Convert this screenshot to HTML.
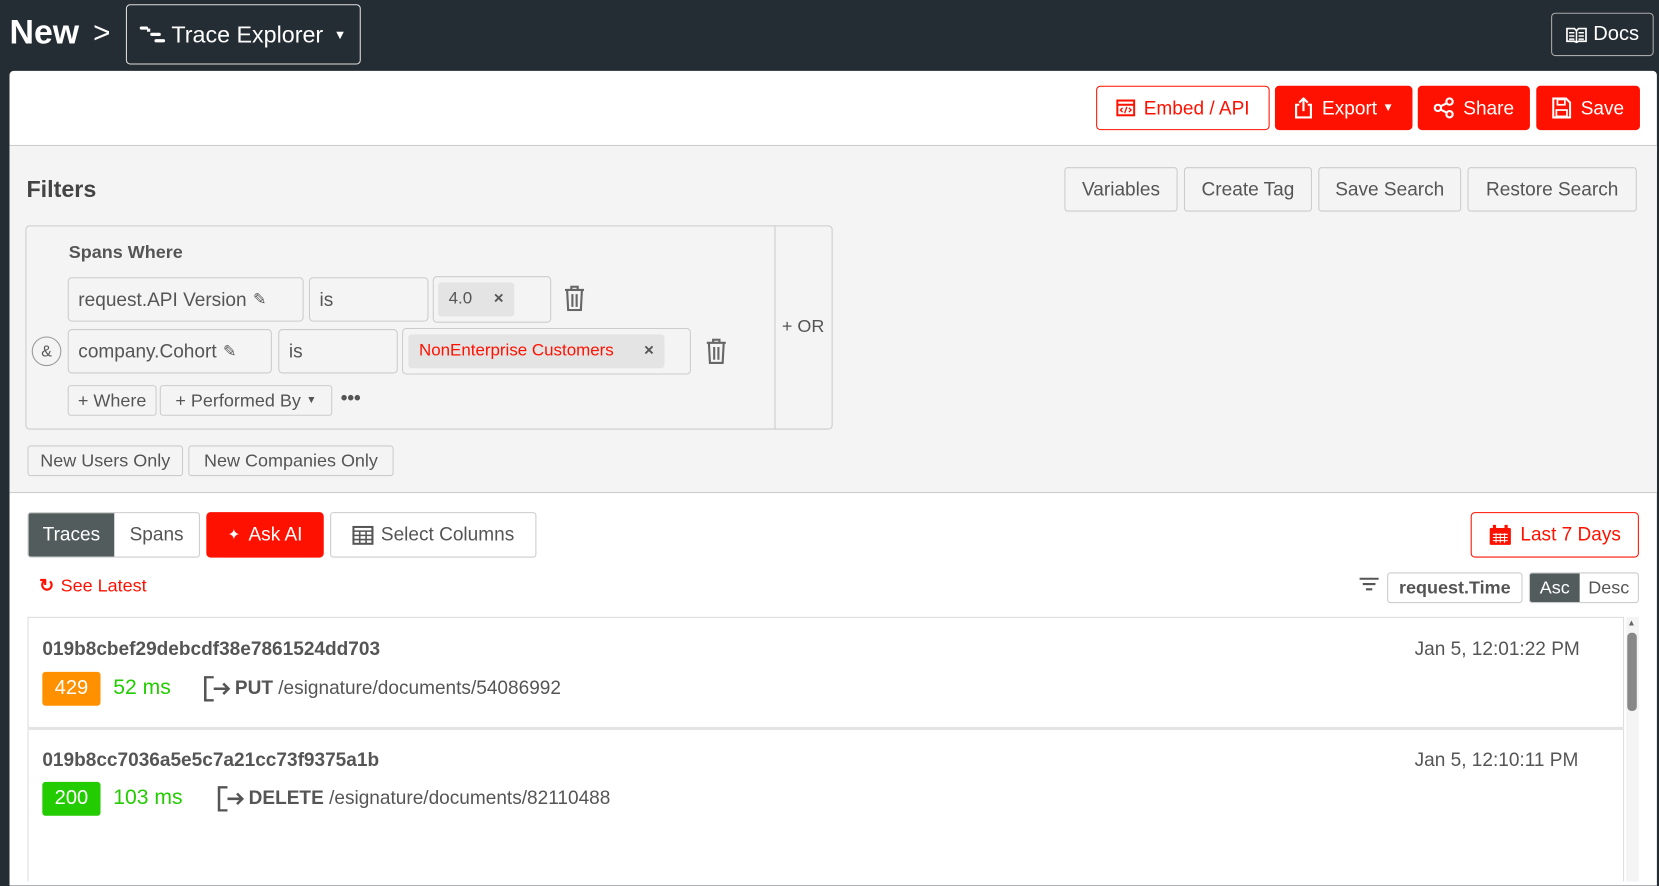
<!DOCTYPE html>
<html><head><meta charset="utf-8"><style>
*{box-sizing:border-box;margin:0;padding:0}
html,body{width:1659px;height:825px;overflow:hidden;background:#252d34}
#w{position:absolute;left:0;top:0;width:1568px;height:780px;transform:scale(1.05804);transform-origin:0 0;font-family:"Liberation Sans",sans-serif;color:#555}
.a{position:absolute}
.btn{position:absolute;border:1px solid #ccc;border-radius:3px;background:#f4f4f4;color:#555;font-size:18px;display:flex;align-items:center;justify-content:center;white-space:nowrap}
.red{background:#ff1100;color:#fff;border-color:#ff1100}
.fld{position:absolute;border:1px solid #ccc;border-radius:4px;background:#f4f4f4;font-size:18px;color:#555;display:flex;align-items:center;padding-left:9px;white-space:nowrap}
.chip{background:#e4e4e4;border-radius:3px;display:flex;align-items:center;font-size:16px;height:32px;padding:0 10px}
</style></head><body><div id="w">
<div class="a" style="left:9px;top:12px;font-size:32px;font-weight:bold;color:#fff">New</div>
<div class="a" style="left:88px;top:15px;font-size:28px;color:#fff">&gt;</div>
<div class="a" style="left:119px;top:4px;width:222px;height:57px;border:1px solid #ddd;border-radius:4px;color:#fff;font-size:22px;display:flex;align-items:center;padding-left:12px">
<svg width="26" height="18" viewBox="0 0 26 18"><rect x="0" y="1" width="8" height="3" rx="1.5" fill="#fff"/><rect x="10" y="7" width="10" height="3" rx="1.5" fill="#fff"/><rect x="14" y="13" width="10" height="3" rx="1.5" fill="#fff"/><rect x="7" y="3" width="3" height="3" fill="#fff"/></svg>
<span style="margin-left:4px">Trace Explorer</span><span style="margin-left:10px;font-size:12px">▼</span></div>
<div class="a" style="left:1466px;top:12px;width:97px;height:41px;border:1px solid #aaa;border-radius:4px;color:#fff;font-size:19px;display:flex;align-items:center;justify-content:center">
<svg width="20" height="16" viewBox="0 0 20 16" style="margin-right:6px"><path d="M1 2h7l2 2 2-2h7v12h-7l-2 1-2-1H1z" fill="none" stroke="#fff" stroke-width="1.6"/><path d="M10 4v11M3 6h5M3 9h5M3 12h5M12 6h5M12 9h5M12 12h5" stroke="#fff" stroke-width="1.4"/></svg>Docs</div>

<div class="a" style="left:9px;top:67px;width:1557px;height:770px;background:#fff;border-radius:4px 4px 0 0"></div>
<div class="a" style="left:9px;top:137px;width:1557px;height:329px;background:#f4f4f4;border-top:1px solid #ccc;border-bottom:1px solid #ccc"></div>

<div class="btn" style="left:1036px;top:81px;width:164px;height:42px;background:#fff;border-color:#ff1100;color:#ff1100;border-radius:4px">
<svg width="18" height="16" viewBox="0 0 18 16" style="margin-right:8px"><rect x="1" y="1" width="16" height="14" fill="none" stroke="#ff1100" stroke-width="2"/><path d="M1 5h16" stroke="#ff1100" stroke-width="2"/><path d="M6 8l-2 2 2 2M12 8l2 2-2 2M10 7l-2 6" fill="none" stroke="#ff1100" stroke-width="1.3"/></svg>Embed / API</div>
<div class="btn red" style="left:1205px;top:81px;width:130px;height:42px;border-radius:4px">
<svg width="18" height="20" viewBox="0 0 18 20" style="margin-right:9px"><path d="M5 7H2v12h14V7h-3M9 13V2M5 5l4-4 4 4" fill="none" stroke="#fff" stroke-width="2"/></svg>Export <span style="font-size:11px;margin-left:5px">▼</span></div>
<div class="btn red" style="left:1340px;top:81px;width:106px;height:42px;border-radius:4px">
<svg width="20" height="20" viewBox="0 0 20 20" style="margin-right:8px"><circle cx="4" cy="10" r="3" fill="none" stroke="#fff" stroke-width="2"/><circle cx="15" cy="4" r="3" fill="none" stroke="#fff" stroke-width="2"/><circle cx="15" cy="16" r="3" fill="none" stroke="#fff" stroke-width="2"/><path d="M6.5 8.5l6-3M6.5 11.5l6 3" stroke="#fff" stroke-width="2"/></svg>Share</div>
<div class="btn red" style="left:1452px;top:81px;width:98px;height:42px;border-radius:4px">
<svg width="18" height="20" viewBox="0 0 18 20" style="margin-right:9px"><path d="M1 1h12l4 4v14H1z" fill="none" stroke="#fff" stroke-width="2"/><rect x="5" y="2" width="7" height="5" fill="none" stroke="#fff" stroke-width="1.6"/><rect x="4" y="12" width="10" height="6" fill="none" stroke="#fff" stroke-width="1.6"/></svg>Save</div>

<div class="a" style="left:25px;top:166px;font-size:22px;font-weight:bold;color:#444">Filters</div>
<div class="btn" style="left:1006px;top:158px;width:107px;height:42px">Variables</div>
<div class="btn" style="left:1119px;top:158px;width:121px;height:42px">Create Tag</div>
<div class="btn" style="left:1246px;top:158px;width:135px;height:42px">Save Search</div>
<div class="btn" style="left:1387px;top:158px;width:160px;height:42px">Restore Search</div>

<div class="a" style="left:24px;top:213px;width:763px;height:193px;border:1px solid #ccc;border-radius:4px"></div>
<div class="a" style="left:732px;top:213px;width:1px;height:193px;background:#ccc"></div>
<div class="a" style="left:739px;top:299px;font-size:17px;color:#555">+ OR</div>
<div class="a" style="left:65px;top:229px;font-size:17px;font-weight:bold;color:#555">Spans Where</div>
<div class="fld" style="left:64px;top:262px;width:223px;height:42px">request.API Version <span style="margin-left:6px;font-size:15px">✎</span></div>
<div class="fld" style="left:292px;top:262px;width:113px;height:42px">is</div>
<div class="fld" style="left:409px;top:261px;width:112px;height:44px;padding-left:4px"><div class="chip" style="width:72px;justify-content:space-between">4.0 <span style="font-weight:bold">×</span></div></div>
<svg class="a" style="left:533px;top:270px" width="20" height="24" viewBox="0 0 20 24"><path d="M1 4h18M7 4V1h6v3M3 4l1 19h12l1-19M8 8v12M12 8v12" fill="none" stroke="#666" stroke-width="2"/></svg>
<div class="a" style="left:30px;top:318px;width:28px;height:28px;border:1px solid #999;border-radius:50%;font-size:15px;display:flex;align-items:center;justify-content:center">&amp;</div>
<div class="fld" style="left:64px;top:311px;width:193px;height:42px">company.Cohort <span style="margin-left:6px;font-size:15px">✎</span></div>
<div class="fld" style="left:263px;top:311px;width:113px;height:42px">is</div>
<div class="fld" style="left:380px;top:310px;width:273px;height:44px;padding-left:5px"><div class="chip" style="width:242px;color:#ff1100;justify-content:space-between">NonEnterprise Customers <span style="font-weight:bold;color:#555">×</span></div></div>
<svg class="a" style="left:667px;top:320px" width="20" height="24" viewBox="0 0 20 24"><path d="M1 4h18M7 4V1h6v3M3 4l1 19h12l1-19M8 8v12M12 8v12" fill="none" stroke="#666" stroke-width="2"/></svg>
<div class="btn" style="left:64px;top:364px;width:84px;height:29px;font-size:17px">+ Where</div>
<div class="btn" style="left:151px;top:364px;width:163px;height:29px;font-size:17px">+ Performed By <span style="font-size:10px;margin-left:5px">▼</span></div>
<div class="a" style="left:322px;top:366px;font-size:18px;font-weight:bold">•••</div>
<div class="btn" style="left:26px;top:421px;width:147px;height:29px;font-size:17px">New Users Only</div>
<div class="btn" style="left:178px;top:421px;width:194px;height:29px;font-size:17px">New Companies Only</div>

<div class="a" style="left:26px;top:484px;width:163px;height:43px;border:1px solid #ccc;border-radius:3px;overflow:hidden;display:flex;font-size:18px">
<div style="width:81px;background:#525c5c;color:#fff;display:flex;align-items:center;justify-content:center">Traces</div>
<div style="flex:1;display:flex;align-items:center;justify-content:center">Spans</div></div>
<div class="btn red" style="left:195px;top:484px;width:111px;height:43px;border-radius:4px"><span style="font-size:14px;margin-right:8px">✦</span>Ask AI</div>
<div class="btn" style="left:312px;top:484px;width:195px;height:43px;background:#fff">
<svg width="20" height="18" viewBox="0 0 20 18" style="margin-right:7px"><rect x="1" y="1" width="18" height="16" fill="none" stroke="#555" stroke-width="2"/><path d="M1 5h18M1 9h18M1 13h18M7 5v12M13 5v12" stroke="#555" stroke-width="1.5"/></svg>Select Columns</div>
<div class="btn" style="left:1390px;top:484px;width:159px;height:43px;background:#fff;border-color:#ff1100;color:#ff1100;border-radius:4px">
<svg width="22" height="20" viewBox="0 0 22 20" style="margin-right:8px"><rect x="1" y="3" width="20" height="16" rx="1" fill="#ff1100"/><rect x="4" y="0" width="3" height="5" fill="#ff1100"/><rect x="15" y="0" width="3" height="5" fill="#ff1100"/><path d="M4 9h14M4 12h14M4 15h14M7 8v9M11 8v9M15 8v9" stroke="#fff" stroke-width="1"/></svg>Last 7 Days</div>

<div class="a" style="left:37px;top:544px;font-size:17px;color:#ff1100"><span style="font-weight:bold;margin-right:6px">↻</span>See Latest</div>
<svg class="a" style="left:1284px;top:545px" width="20" height="16" viewBox="0 0 20 16"><path d="M1 2h18M4 7h12M7 12h6" stroke="#555" stroke-width="2"/></svg>
<div class="btn" style="left:1311px;top:541px;width:128px;height:29px;background:#fff;font-weight:bold;font-size:17px">request.Time</div>
<div class="a" style="left:1445px;top:541px;width:104px;height:29px;border:1px solid #ccc;border-radius:3px;overflow:hidden;display:flex;font-size:17px">
<div style="width:47px;background:#525c5c;color:#fff;display:flex;align-items:center;justify-content:center">Asc</div>
<div style="flex:1;display:flex;align-items:center;justify-content:center">Desc</div></div>

<div class="a" style="left:26px;top:583px;width:1509px;height:250px;border:1px solid #ddd;border-bottom:none"></div>
<div class="a" style="left:26px;top:687px;width:1509px;height:3px;background:#e4e4e4"></div>
<div class="a" style="left:1537px;top:583px;width:12px;height:250px;background:#f4f4f4"></div>
<div class="a" style="left:1538px;top:598px;width:9px;height:74px;background:#888;border-radius:4px"></div>
<div class="a" style="left:1538px;top:584px;font-size:8px;color:#666">▲</div>

<div class="a" style="left:40px;top:603px;font-size:18px;font-weight:bold">019b8cbef29debcdf38e7861524dd703</div>
<div class="a" style="left:1337px;top:603px;font-size:18px">Jan 5, 12:01:22 PM</div>
<div class="a" style="left:40px;top:635px;width:55px;height:32px;background:#ff9100;border-radius:3px;color:#fff;font-size:19px;display:flex;align-items:center;justify-content:center">429</div>
<div class="a" style="left:107px;top:639px;font-size:20px;color:#22cc00">52 ms</div>
<svg class="a" style="left:192px;top:639px" width="26" height="24" viewBox="0 0 26 24"><path d="M10 1H2v22h8M10 12h14M19 7l5 5-5 5" fill="none" stroke="#555" stroke-width="2.4"/></svg>
<div class="a" style="left:222px;top:640px;font-size:18px"><b>PUT</b> /esignature/documents/54086992</div>

<div class="a" style="left:40px;top:708px;font-size:18px;font-weight:bold">019b8cc7036a5e5c7a21cc73f9375a1b</div>
<div class="a" style="left:1337px;top:708px;font-size:18px">Jan 5, 12:10:11 PM</div>
<div class="a" style="left:40px;top:739px;width:55px;height:32px;background:#22cc00;border-radius:3px;color:#fff;font-size:19px;display:flex;align-items:center;justify-content:center">200</div>
<div class="a" style="left:107px;top:743px;font-size:20px;color:#22cc00">103 ms</div>
<svg class="a" style="left:205px;top:743px" width="26" height="24" viewBox="0 0 26 24"><path d="M10 1H2v22h8M10 12h14M19 7l5 5-5 5" fill="none" stroke="#555" stroke-width="2.4"/></svg>
<div class="a" style="left:235px;top:744px;font-size:18px"><b>DELETE</b> /esignature/documents/82110488</div>
</div></body></html>
